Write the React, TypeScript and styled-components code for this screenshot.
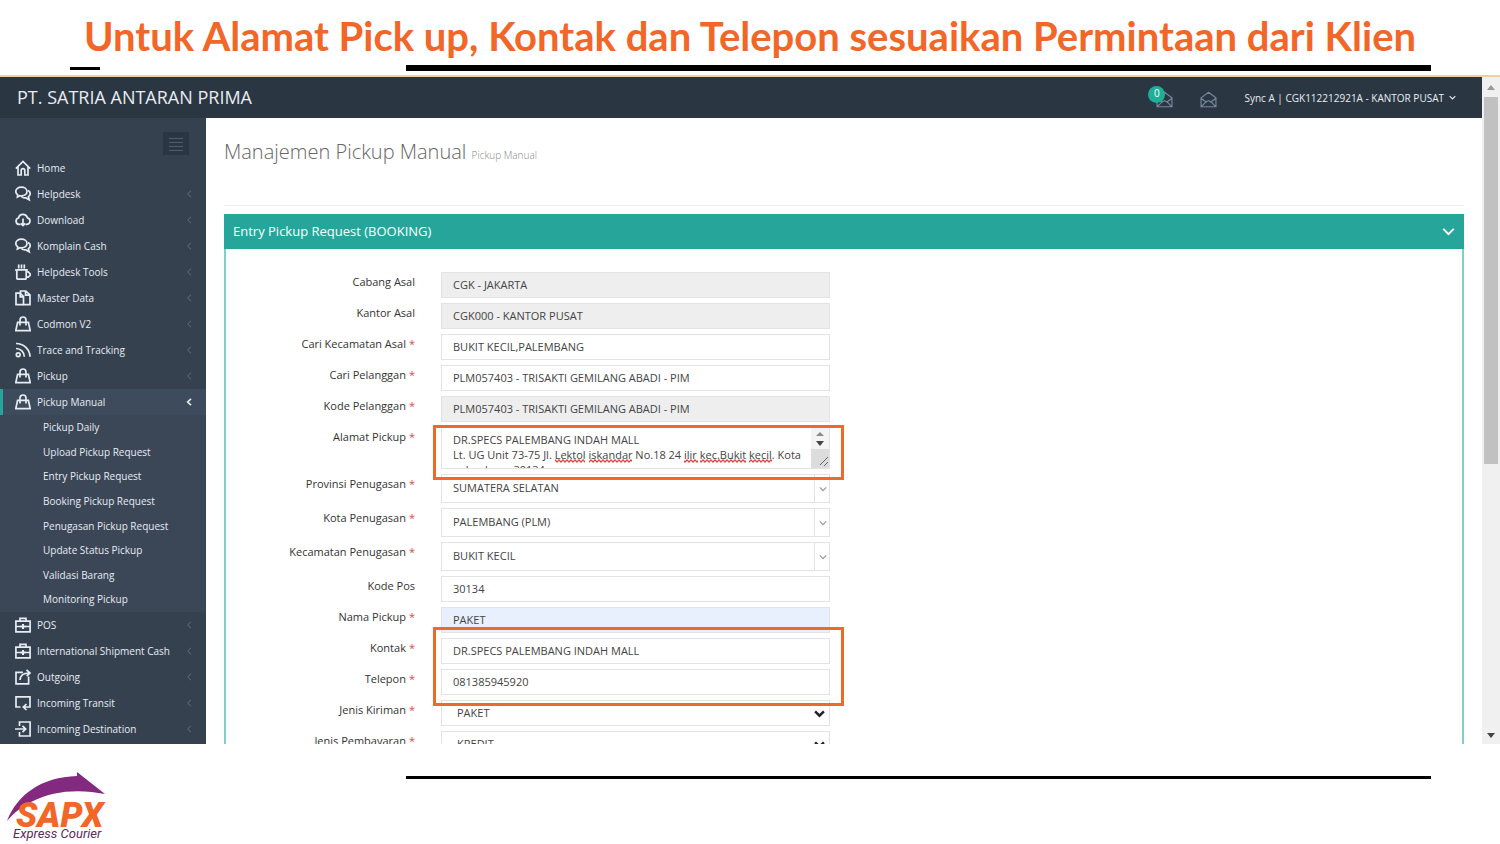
import React from "react";
import styled, { createGlobalStyle, css } from "styled-components";

const Global = createGlobalStyle`
  *, *::before, *::after { box-sizing: border-box; }
  body { margin: 0; background: #fff; font-family: "Open Sans", "Noto Sans", sans-serif; }
  h1, h2, h3, p, ul { margin: 0; padding: 0; }
  ul { list-style: none; }
  button, input, select, textarea { font: inherit; }
`;

const Slide = styled.div`
  display: flex;
  flex-direction: column;
  height: 100vh;
  overflow: hidden;
`;

const SlideTitle = styled.h1`
  height: 65px;
  padding-top: 4px;
  line-height: 64px;
  font-family: Lato, sans-serif;
  font-size: 40px;
  font-weight: 700;
  text-align: center;
  white-space: nowrap;
  color: #f26627;
`;

const Rules = styled.div`
  display: flex;
  align-items: center;
  flex: none;
  height: 6px;
  margin: 0 69px 4px 70px;
`;

const ShortRule = styled.span`
  flex: none;
  width: 30px;
  height: 3px;
  margin-right: 306px;
  background: #000;
`;

const LongRule = styled.span`
  flex: 1;
  height: 6px;
  background: #000;
`;

const Screen = styled.div`
  display: flex;
  flex: 1;
  min-height: 0;
  border-top: 2px solid #efcf9b;
`;

const Application = styled.div`
  display: flex;
  flex-direction: column;
  flex: 1;
  min-width: 0;
  overflow: hidden;
`;

const TopBar = styled.header`
  display: flex;
  align-items: center;
  justify-content: space-between;
  flex: none;
  height: 41px;
  padding: 0 26px 0 17px;
  background: #2b3643;
  color: #e8edf2;
`;

const Brand = styled.div`
  padding-bottom: 2px;
  font-size: 18px;
  line-height: 24px;
`;

const TopTools = styled.div`
  display: flex;
  align-items: center;
`;

const IconButton = styled.button`
  position: relative;
  width: 17px;
  height: 18px;
  margin: 4px 27px 0 0;
  padding: 0;
  border: 0;
  background: none;
  color: #76879b;
`;

const Badge = styled.span`
  position: absolute;
  top: -5px;
  left: -8px;
  width: 17px;
  height: 17px;
  border-radius: 50%;
  background: #1fae98;
  color: #fff;
  font-size: 10px;
  line-height: 15px;
  text-align: center;
`;

const UserButton = styled.button`
  display: flex;
  align-items: center;
  gap: 5px;
  padding: 0;
  border: 0;
  background: none;
  color: #e8edf2;
  font-size: 10px;
  line-height: 16px;
`;

const Columns = styled.div`
  display: flex;
  flex: 1;
  min-height: 0;
`;

const Sidebar = styled.nav`
  display: flex;
  flex-direction: column;
  flex: none;
  width: 206px;
  padding-top: 14px;
  overflow: hidden;
  background: #364150;
`;

const Toggle = styled.button`
  display: grid;
  place-items: center;
  align-self: flex-end;
  flex: none;
  width: 26px;
  height: 23px;
  margin-right: 17px;
  padding: 0;
  border: 0;
  background: #2b3643;
  color: #4d5c6e;
`;

const MenuLink = styled.a<{ $active?: boolean }>`
  display: flex;
  align-items: center;
  gap: 6px;
  height: 26px;
  padding: 0 13px 0 15px;
  color: #e6ecf3;
  font-size: 10px;
  line-height: 16px;
  text-decoration: none;
  white-space: nowrap;
  ${(p) => p.$active && css`
    background: #3e4b5c;
    box-shadow: inset 3px 0 0 #26a69a;
  `}
  span { flex: 1; }
  svg { flex: none; }
`;

const SubMenu = styled.ul`
  display: grid;
  grid-auto-rows: 1fr;
  height: 197px;
  background: #3b4657;
`;

const SubLink = styled.a`
  display: block;
  padding-left: 43px;
  color: #e6ecf3;
  font-size: 10px;
  line-height: 24px;
  text-decoration: none;
  white-space: nowrap;
`;

const Main = styled.main`
  flex: 1;
  min-width: 0;
  padding: 18px 18px 0;
  overflow: hidden;
  background: #fff;
`;

const PageHead = styled.div`
  height: 70px;
  border-bottom: 1px solid #eee;
`;

const PageTitle = styled.h2`
  color: #666;
  font-size: 20px;
  font-weight: 300;
  line-height: 32px;
  small { color: #888; font-size: 10px; }
`;

const Portlet = styled.section`
  margin-top: 8px;
  border: 2px solid #7fd0c8;
  border-top: 0;
`;

const PortletHead = styled.div`
  display: flex;
  align-items: center;
  justify-content: space-between;
  height: 35px;
  margin: 0 -2px;
  padding: 0 9px 2px;
  background: #26a69a;
  color: #fff;
`;

const PortletTitle = styled.h3`
  font-size: 13px;
  font-weight: 400;
  line-height: 20px;
`;

const PlainButton = styled.button`
  display: grid;
  place-items: center;
  padding: 2px 0 0;
  border: 0;
  background: none;
  color: #fff;
`;

const Form = styled.form`
  display: flex;
  flex-direction: column;
  gap: 5px;
  padding-top: 23px;
`;

const Row = styled.div`
  display: grid;
  grid-template-columns: minmax(0, 189fr) minmax(0, 389fr) minmax(0, 606fr);
  column-gap: 26px;
  align-items: start;
`;

const Label = styled.label`
  padding-top: 2px;
  color: #333;
  font-size: 11px;
  line-height: 16px;
  text-align: right;
  white-space: nowrap;
`;

const Star = styled.span`
  margin-left: 3px;
  color: #e04a4a;
`;

const Field = styled.div`
  position: relative;
`;

const control = css`
  display: block;
  width: 100%;
  margin: 0;
  border: 1px solid #e3e3e3;
  border-radius: 0;
  outline: 0;
  color: #444;
  font-size: 11px;
`;

const TextInput = styled.input<{ $filled?: boolean }>`
  ${control}
  height: 26px;
  padding: 0 11px 2px;
  background: ${(p) => (p.readOnly ? "#eee" : p.$filled ? "#e8f0fe" : "#fff")};
`;

const TextArea = styled.textarea`
  ${control}
  height: 42px;
  padding: 4px 18px 0 11px;
  line-height: 15px;
  resize: none;
  overflow: hidden;
`;

const Select = styled.select<{ $native?: boolean }>`
  ${control}
  height: ${(p) => (p.$native ? 26 : 29)}px;
  padding: 0 ${(p) => (p.$native ? 15 : 11)}px 2px;
  appearance: none;
  background: #fff;
`;

const SelectMark = styled.span<{ $native?: boolean }>`
  position: absolute;
  top: 0;
  right: 0;
  bottom: 0;
  display: grid;
  place-items: center;
  width: ${(p) => (p.$native ? 22 : 16)}px;
  border-left: ${(p) => (p.$native ? "0" : "1px solid #e3e3e3")};
  color: ${(p) => (p.$native ? "#222" : "#999")};
  pointer-events: none;
`;

const AreaScroll = styled.span`
  position: absolute;
  top: 1px;
  right: 1px;
  width: 18px;
  height: 40px;
  background: #f4f4f4;
  svg { display: block; }
`;

const Squiggles = styled.svg`
  position: absolute;
  top: 32px;
  left: 12px;
  pointer-events: none;
`;

const Highlight = styled.span<{ $rows: "one" | "two" }>`
  position: absolute;
  z-index: 2;
  inset: ${(p) => (p.$rows === "one" ? "-2px -14px -11px -8px" : "-11px -14px -42px -8px")};
  border: 3px solid #ec6a2b;
  pointer-events: none;
`;

const ScrollTrack = styled.div`
  display: flex;
  flex-direction: column;
  align-items: center;
  justify-content: space-between;
  flex: none;
  width: 18px;
  padding: 8px 0 6px;
  background: #f0f0f0;
`;

const ScrollTop = styled.div`
  display: flex;
  flex-direction: column;
  align-items: center;
  gap: 7px;
  height: 58%;
`;

const Thumb = styled.div`
  flex: 1;
  width: 14px;
  background: #c1c1c1;
`;

const Footer = styled.footer`
  display: flex;
  flex: none;
  height: 100px;
  padding: 27px 69px 0 5px;
`;

const FooterRule = styled.div`
  flex: 1;
  height: 3px;
  margin: 5px 0 0 297px;
  background: #000;
`;

const Icon = ({ size = 16, width = 1.7, children }: { size?: number; width?: number; children: React.ReactNode }) => (
  <svg width={size} height={size} viewBox="0 0 16 16" fill="none" stroke="currentColor" strokeWidth={width} aria-hidden="true">
    {children}
  </svg>
);

const Chevron = ({ d, size = 8, width = 1.5 }: { d: "left" | "down"; size?: number; width?: number }) => (
  <svg width={size} height={size} viewBox="0 0 8 8" fill="none" stroke="currentColor" strokeWidth={width} aria-hidden="true">
    <path d={d === "left" ? "M6 .8 2.6 4 6 7.2" : "M.8 2.4 4 5.6l3.2-3.2"} />
  </svg>
);

const icons = {
  home: <><path d="M.8 8.6 8 1.4l7.2 7.2" /><path d="M3 7v8h3.2v-4.6c0-1 .8-1.7 1.8-1.7s1.8.7 1.8 1.7V15H13V7" /></>,
  chat: <><path d="M6.4 1.2c3.2 0 5.6 1.8 5.6 4.3S9.6 9.8 6.4 9.8c-.5 0-1 0-1.4-.1L2.400 11l.3-2.200C1.500 8 .8 6.800.8 5.500c0-2.500 2.400-4.300 5.600-4.300Z" /><path d="M13 4.600c1.400.7 2.200 1.800 2.200 3.100 0 1.200-.7 2.200-1.800 2.900l.8 3.200-3.200-1.900c-1.800.2-3.600-.3-4.600-1.400" /></>,
  cloud: <><path d="M5.500 12.300H4a3.200 3.200 0 0 1-.5-6.300 4.600 4.600 0 0 1 8.900-.2 3.300 3.300 0 0 1-.4 6.500h-1.500" /><path d="M8 6.500v7M5.800 11.300 8 13.600l2.200-2.300" /></>,
  mug: <><path d="M1.800 5.800h9.400v8.400a1 1 0 0 1-1 1H2.800a1 1 0 0 1-1-1V6M0 6h13M11.200 7.800h2l2 2v1.600l-2 1.800h-2" /><path d="M3.700.5v4M6.500.5v4M9.300.5v4" /></>,
  pages: <><path d="M5.200 3.200H1v11.400h7.500M5.200 3.200v3.600h3" /><path d="M5.500 3.500V1h5.300L15 4.800v9.800H8.500V6.600L5.200 3.200M10.500 1v4.200H15" /></>,
  bag: <><path d="M2.600 6.400h10.800l1.800 8.200H.8Z" /><path d="M5 9.600V4.200C5 2.400 6.300 1 8 1s3 1.400 3 3.200v5.400" /></>,
  rss: <><circle cx="3.200" cy="12.800" r="1.900" /><path d="M1 6.500c4.700 0 8.300 3.600 8.300 8.300M1 1.500c7.600 0 14 5.700 14 13.300" /></>,
  case: <><path d="M.9 4.200h14.200v10.600H.9ZM5 4V1.300h6V4M.9 9.500H6M10 9.500h5.100" /><path d="M8 7v5M5.500 9.500h5" strokeWidth="2" /></>,
  share: <><path d="M8 3.400H1v11.400h12.600V7.500" /><path d="M5 11c.2-4 2.500-7 9-7M11.500.8 15 4l-3.300 3" /></>,
  back: <><path d="M5.500 12H1V1.800h14V12H8.500M11.500 9l-3.200 3 3.200 3" /></>,
  enter: <><path d="M4.500 5V1h10.600v14H4.500v-4M0 8h10.500M7.500 4.800 10.700 8l-3.200 3.200" /></>,
  mail: <><path d="M1 6.500 8 1.200l7 5.300v8.300H1ZM1.500 14.500 6 9.800M14.500 14.500 10 9.800M1.200 7l4.600 3.300L8 9l2.200 1.300L14.800 7" /></>,
};

type IconName = keyof typeof icons;

const topMenu: [string, IconName][] = [
  ["Home", "home"], ["Helpdesk", "chat"], ["Download", "cloud"], ["Komplain Cash", "chat"],
  ["Helpdesk Tools", "mug"], ["Master Data", "pages"], ["Codmon V2", "bag"],
  ["Trace and Tracking", "rss"], ["Pickup", "bag"], ["Pickup Manual", "bag"],
];
const subMenu = [
  "Pickup Daily", "Upload Pickup Request", "Entry Pickup Request", "Booking Pickup Request",
  "Penugasan Pickup Request", "Update Status Pickup", "Validasi Barang", "Monitoring Pickup",
];
const lowerMenu: [string, IconName][] = [
  ["POS", "case"], ["International Shipment Cash", "case"], ["Outgoing", "share"],
  ["Incoming Transit", "back"], ["Incoming Destination", "enter"],
];

const Arrow = styled.i<{ $active?: boolean }>`
  display: flex;
  color: ${(p) => (p.$active ? "#e8edf2" : "#5f6e80")};
`;

const MenuItem = ({ label, icon }: { label: string; icon: IconName }) => {
  const active = label === "Pickup Manual";
  return (
    <li>
      <MenuLink href="#" $active={active}>
        <Icon>{icons[icon]}</Icon>
        <span>{label}</span>
        {label !== "Home" && <Arrow $active={active}><Chevron d="left" width={active ? 1.6 : 1} /></Arrow>}
      </MenuLink>
      {active && (
        <SubMenu>
          {subMenu.map((s) => <li key={s}><SubLink href="#">{s}</SubLink></li>)}
        </SubMenu>
      )}
    </li>
  );
};

type Kind = "text" | "readonly" | "filled" | "area" | "select" | "native";
interface FieldSpec { label: string; value: string; kind: Kind; required?: boolean; mark?: "one" | "two" }

const fields: FieldSpec[] = [
  { label: "Cabang Asal", value: "CGK - JAKARTA", kind: "readonly" },
  { label: "Kantor Asal", value: "CGK000 - KANTOR PUSAT", kind: "readonly" },
  { label: "Cari Kecamatan Asal", value: "BUKIT KECIL,PALEMBANG", kind: "text", required: true },
  { label: "Cari Pelanggan", value: "PLM057403 - TRISAKTI GEMILANG ABADI - PIM", kind: "text", required: true },
  { label: "Kode Pelanggan", value: "PLM057403 - TRISAKTI GEMILANG ABADI - PIM", kind: "readonly", required: true },
  {
    label: "Alamat Pickup", kind: "area", required: true, mark: "one",
    value: "DR.SPECS PALEMBANG INDAH MALL\nLt. UG Unit 73-75 Jl. Lektol iskandar No.18 24 ilir kec.Bukit kecil. Kota\npalembang 30134",
  },
  { label: "Provinsi Penugasan", value: "SUMATERA SELATAN", kind: "select", required: true },
  { label: "Kota Penugasan", value: "PALEMBANG (PLM)", kind: "select", required: true },
  { label: "Kecamatan Penugasan", value: "BUKIT KECIL", kind: "select", required: true },
  { label: "Kode Pos", value: "30134", kind: "text" },
  { label: "Nama Pickup", value: "PAKET", kind: "filled", required: true },
  { label: "Kontak", value: "DR.SPECS PALEMBANG INDAH MALL", kind: "text", required: true, mark: "two" },
  { label: "Telepon", value: "081385945920", kind: "text", required: true },
  { label: "Jenis Kiriman", value: "PAKET", kind: "native", required: true },
  { label: "Jenis Pembayaran", value: "KREDIT", kind: "native", required: true },
];

const misspelt = [[102, 132], [136, 179], [231, 245], [247, 293], [296, 319]];

const Control = ({ id, spec }: { id: string; spec: FieldSpec }) => {
  if (spec.kind === "area") {
    return (
      <>
        <TextArea id={id} defaultValue={spec.value} spellCheck={false} wrap="off" />
        <Squiggles width="340" height="4" viewBox="0 0 340 4" aria-hidden="true">
          <defs>
            <pattern id="wave" width="4" height="4" patternUnits="userSpaceOnUse">
              <path d="M-1 4 0 3l2-2 2 2 1 1" fill="none" stroke="#e04848" strokeWidth="1.3" />
            </pattern>
          </defs>
          {misspelt.map(([a, b]) => <rect key={a} x={a} width={b - a} height="4" fill="url(#wave)" />)}
        </Squiggles>
        <AreaScroll aria-hidden="true">
          <svg width="18" height="40" viewBox="0 0 18 40">
            <path d="M5 8h8L9 4Z" fill="#8a8a8a" />
            <path d="M5 13h8l-4 5Z" fill="#444" />
            <path d="M0 21h18v19H0Z" fill="#dcdcdc" />
            <path d="m9 37 8-8M13 38l4-4" stroke="#666" />
          </svg>
        </AreaScroll>
      </>
    );
  }
  if (spec.kind === "select" || spec.kind === "native") {
    const native = spec.kind === "native";
    return (
      <>
        <Select id={id} $native={native}><option>{spec.value}</option></Select>
        <SelectMark $native={native}><Chevron d="down" size={native ? 11 : 8} width={native ? 1.8 : 1.2} /></SelectMark>
      </>
    );
  }
  return <TextInput id={id} defaultValue={spec.value} readOnly={spec.kind === "readonly"} $filled={spec.kind === "filled"} />;
};

const Logo = () => (
  <svg width="104" height="73" viewBox="0 0 104 73" role="img" aria-label="SAPX Express Courier">
    <path d="M2 50C12 24 36 6 72 5V1l28 22C76 18 48 19 26 31 14 37 8 43 2 50Z" fill="#83297f" />
    <text x="11" y="56" fontFamily="Roboto, sans-serif" fontWeight="900" fontStyle="italic" fontSize="35" fill="#f26627">SAPX</text>
    <text x="8" y="67" fontFamily="Roboto, sans-serif" fontStyle="italic" fontSize="13" fill="#5c2a62">Express Courier</text>
  </svg>
);

export default function App() {
  return (
    <Slide>
      <Global />
      <SlideTitle>Untuk Alamat Pick up, Kontak dan Telepon sesuaikan Permintaan dari Klien</SlideTitle>
      <Rules><ShortRule /><LongRule /></Rules>
      <Screen>
        <Application>
          <TopBar>
            <Brand>PT. SATRIA ANTARAN PRIMA</Brand>
            <TopTools>
              <IconButton aria-label="Notifications"><Icon size={17} width={1.1}>{icons.mail}</Icon><Badge>0</Badge></IconButton>
              <IconButton aria-label="Messages"><Icon size={17} width={1.1}>{icons.mail}</Icon></IconButton>
              <UserButton>Sync A | CGK112212921A - KANTOR PUSAT <Chevron d="down" size={7} width={1.2} /></UserButton>
            </TopTools>
          </TopBar>
          <Columns>
            <Sidebar>
              <Toggle aria-label="Toggle menu"><Icon width={1}><path d="M1 2.500h14M1 6.500h14M1 10.500h14M1 14.500h14" /></Icon></Toggle>
              <ul>
                {[...topMenu, ...lowerMenu].map(([label, icon]) => <MenuItem key={label} label={label} icon={icon} />)}
              </ul>
            </Sidebar>
            <Main>
              <PageHead>
                <PageTitle>Manajemen Pickup Manual <small>Pickup Manual</small></PageTitle>
              </PageHead>
              <Portlet>
                <PortletHead>
                  <PortletTitle>Entry Pickup Request (BOOKING)</PortletTitle>
                  <PlainButton aria-label="Collapse"><Chevron d="down" size={13} width={1.2} /></PlainButton>
                </PortletHead>
                <Form>
                  {fields.map((f, i) => (
                    <Row key={f.label}>
                      <Label htmlFor={`field-${i}`}>{f.label}{f.required && <Star>*</Star>}</Label>
                      <Field>
                        <Control id={`field-${i}`} spec={f} />
                        {f.mark && <Highlight $rows={f.mark} />}
                      </Field>
                    </Row>
                  ))}
                </Form>
              </Portlet>
            </Main>
          </Columns>
        </Application>
        <ScrollTrack aria-hidden="true">
          <ScrollTop>
            <svg width="8" height="5" viewBox="0 0 8 5"><path d="M0 5h8L4 0Z" fill="#999" /></svg>
            <Thumb />
          </ScrollTop>
          <svg width="8" height="5" viewBox="0 0 8 5"><path d="M0 0h8L4 5Z" fill="#444" /></svg>
        </ScrollTrack>
      </Screen>
      <Footer>
        <Logo />
        <FooterRule />
      </Footer>
    </Slide>
  );
}
